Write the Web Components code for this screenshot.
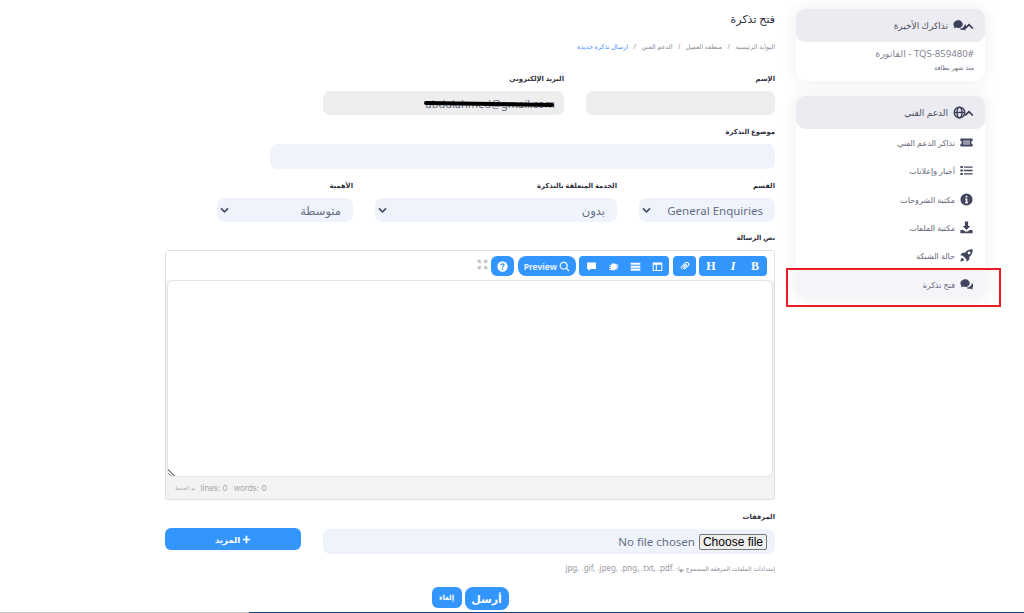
<!DOCTYPE html>
<html lang="ar">
<head>
<meta charset="utf-8">
<title>فتح تذكرة</title>
<style>
  html, body { margin: 0; height: 100%; overflow: hidden; background: #fff; }
  body { font-family: "Noto Sans", "DejaVu Sans", sans-serif; color: #3f4254; }
</style>
</head>
<body>
<ticket-page></ticket-page>

<script>
const ICONS = {
  chat: '<path d="M7 1.5C3.2 1.5.5 3.8.5 6.6c0 1.2.5 2.3 1.4 3.2-.3.9-.9 1.6-1.2 1.9 1.2 0 2.6-.6 3.4-1.1 1.9.7 3.4.6 4.7.1 1.9-.8 3.2-2.3 3.2-4.1 0-2.8-2.8-5.1-5-5.1z"/><path d="M14.5 6.2c.1 3-2.6 5.3-6.3 5.7 1 1.2 2.9 1.8 4.9 1.3.8.5 1.9.9 2.9.9-.5-.5-.9-1.1-1.1-1.7 1-.8 1.6-1.8 1.6-2.9 0-1.4-.9-2.6-2-3.3z"/>',
  globe: '<g fill="none" stroke="currentColor" stroke-width="1.8"><circle cx="8" cy="8" r="6.5"/><ellipse cx="8" cy="8" rx="3" ry="6.5"/><path d="M1.5 8h13"/></g>',
  ticket: '<path fill-rule="evenodd" d="M.5 3h15v3.2a1.800 1.800 0 0 0 0 3.600V13H.5V9.800a1.800 1.800 0 0 0 0-3.600zM4 5.500v5h8v-5z"/><path opacity=".55" d="M4 5.500h8v5H4z"/>',
  list: '<path d="M.5 2.500h3v2.500h-3zM.5 6.800h3v2.500h-3zM.5 11h3v2.500h-3zM5 3h10.500v1.600H5zM5 7.200h10.500v1.600H5zM5 11.400h10.500V13H5z"/>',
  info: '<path fill-rule="evenodd" d="M8 .5a7.500 7.500 0 1 0 0 15 7.500 7.500 0 0 0 0-15zM7 3.500h2v2H7zM6.500 6.800h2.500v4.200h.8v1.500H6.300V11h.8V8.300h-.6z"/>',
  download: '<path d="M6 .5h4v5.500h2.800L8 11 3.200 6H6zM.5 11h3.800l2 2h3.400l2-2h3.800v4H.500z"/>',
  rocket: '<path d="M15.600.4C12 .2 8.800 1.400 6.200 4.500H3L.4 7.800l3.100.4 4.300 4.300.4 3.100 3.300-2.600v-3.200C14.600 7.200 15.800 4 15.600.4zM11.200 6.500a1.700 1.700 0 1 1 0-3.400 1.700 1.700 0 0 1 0 3.400zM2.700 10.800C1.300 11.500.8 13.500.5 15.500c2-.3 4-.8 4.700-2.200z"/>',
  caret: '<path d="M2.200 10.500 8 4.700l5.800 5.800-1.500 1.500L8 7.700 3.700 12z"/>',
  down: '<path d="M2 5.800 8 11.800l6-6L12.200 4 8 8.200 3.800 4z"/>',
  expand: '<path d="M1 1h5L4.500 2.500 6.500 4.500 4.500 6.500 2.500 4.500 1 6zM15 1v5l-1.500-1.500-2 2-2-2 2-2L10 1zM1 15v-5l1.500 1.500 2-2 2 2-2 2L6 15zM15 15h-5l1.500-1.500-2-2 2-2 2 2L15 10z"/>',
  help: '<path fill-rule="evenodd" d="M8 .5a7.500 7.500 0 1 0 0 15 7.500 7.500 0 0 0 0-15zM7 11h2v2H7zM5 6c0-1.700 1.300-2.800 3.100-2.800S11 4.300 11 5.900c0 1.300-.8 1.900-1.500 2.400-.4.300-.6.500-.6 1.100H7.100c0-1.200.5-1.800 1.200-2.300.6-.4.900-.6.900-1.100 0-.5-.5-.9-1.100-.9-.7 0-1.200.5-1.200 1.100z"/>',
  search: '<path fill-rule="evenodd" d="M6.800.8a6 6 0 1 0 3.500 10.900l3.500 3.500 1.500-1.500-3.500-3.500A6 6 0 0 0 6.800.8zm0 2a4 4 0 1 1 0 8 4 4 0 0 1 0-8z"/>',
  comment: '<path d="M1.500 2h13v9.500H7L3.500 14.500v-3h-2z"/>',
  bug: '<path d="M5.500 3.500h5l1.500 2 2.500-1v1.500l-2 .8v1h2.500v1.500H12v1l2 .8v1.500l-2.500-1-1.500 1.800h-4L4.500 12.600 2 13.600v-1.500l2-.8v-1H1.500V8.800H4v-1l-2-.8V5.500l2.500 1z"/>',
  rows: '<path d="M1 2.500h14v3H1zM1 6.800h14v3H1zM1 11h14v3H1z"/>',
  table: '<path fill-rule="evenodd" d="M1 2h14v12.500H1zM2.500 5.500V13h3V5.500zM7 5.500V13h6.500V5.500z"/>',
  link: '<path d="M13.800 2.200a3.600 3.600 0 0 0-5.100 0L3 7.900a2.500 2.500 0 0 0 3.500 3.500L11 6.900a1.400 1.400 0 0 0-2-2L5.400 8.500l1 1L10 5.900l.1.100-4.500 4.500a1.200 1.200 0 0 1-1.700-1.700l5.700-5.700a2.300 2.300 0 0 1 3.200 3.200L7.300 11.800l1 1 5.500-5.500a3.600 3.600 0 0 0 0-5.100z"/>',
  plus: '<path d="M6.500 1.500h3v5h5v3h-5v5h-3v-5h-5v-3h5z"/>'
};

class XIcon extends HTMLElement {
  connectedCallback() {
    const size = this.getAttribute('size') || 14;
    this.attachShadow({ mode: 'open' }).innerHTML = `
      <style>
        :host { display: inline-flex; flex: none; }
        svg { display: block; fill: currentColor; }
      </style>
      <svg width="${size}" height="${size}" viewBox="0 0 16 16">${ICONS[this.getAttribute('name')]}</svg>`;
  }
}
customElements.define('x-icon', XIcon);

class SideCard extends HTMLElement {
  connectedCallback() {
    const title = this.getAttribute('title');
    const icon = this.getAttribute('icon');
    this.removeAttribute('title');
    this.attachShadow({ mode: 'open' }).innerHTML = `
      <style>
        :host {
          display: block;
          background: #fff;
          border-radius: 9px;
          box-shadow: 0 0 16px rgba(60, 60, 90, .09);
        }
        header {
          height: 33px;
          box-sizing: border-box;
          padding: 0 10px;
          display: flex;
          align-items: center;
          gap: 5px;
          background: #ebebf1;
          border-radius: 9px;
          font-size: 9px;
          color: #50505f;
        }
        header x-icon { color: #3c3f58; }
        .caret { margin-left: -8px; color: #30324a; }
      </style>
      <header>
        <x-icon class="caret" name="caret" size="12"></x-icon>
        <x-icon name="${icon}" size="13"></x-icon>
        <span>${title}</span>
      </header>
      <slot></slot>`;
  }
}
customElements.define('side-card', SideCard);

class SideItem extends HTMLElement {
  connectedCallback() {
    this.attachShadow({ mode: 'open' }).innerHTML = `
      <style>
        :host {
          display: flex;
          align-items: center;
          gap: 5px;
          height: 28.3px;
          padding: 0 12px;
          font-size: 8px;
          color: #65657a;
          border-radius: 0 0 9px 9px;
        }
        :host(:first-child) { margin-top: -.5px; }
        :host([active]) { background: #f5f5f9; }
        x-icon { color: #43465f; }
      </style>
      <x-icon name="${this.getAttribute('icon')}" size="13"></x-icon>
      <span><slot></slot></span>`;
  }
}
customElements.define('side-item', SideItem);

class AppSidebar extends HTMLElement {
  connectedCallback() {
    this.attachShadow({ mode: 'open' }).innerHTML = `
      <style>
        :host {
          display: flex;
          flex-direction: column;
          gap: 15px;
          width: 189px;
          position: relative;
        }
        .recent { padding: 6px 11px 0; box-sizing: border-box; height: 39px; color: #858596; font-size: 9.6px; line-height: 12px; }
        .recent small { display: block; font-size: 6.5px; color: #6c6c7c; margin-top: 2px; }
        .mark {
          position: absolute;
          left: -10.5px;
          top: 258.5px;
          width: 211px;
          height: 35px;
          border: 2.5px solid #ed1c24;
        }
      </style>
      <side-card title="تذاكرك الأخيرة" icon="chat">
        <div class="recent">
          #TQS-859480 - الفاتورة
          <small>منذ شهر بطاقة</small>
        </div>
      </side-card>
      <side-card title="الدعم الفني" icon="globe">
        <side-item icon="ticket">تذاكر الدعم الفني</side-item>
        <side-item icon="list">أخبار وإعلانات</side-item>
        <side-item icon="info">مكتبة الشروحات</side-item>
        <side-item icon="download">مكتبة الملفات</side-item>
        <side-item icon="rocket">حالة الشبكة</side-item>
        <side-item icon="chat" active>فتح تذكرة</side-item>
      </side-card>
      <div class="mark"></div>`;
  }
}
customElements.define('app-sidebar', AppSidebar);

class FormField extends HTMLElement {
  connectedCallback() {
    this.attachShadow({ mode: 'open' }).innerHTML = `
      <style>
        :host { display: block; }
        label {
          display: block;
          height: 13px;
          margin-bottom: 6px;
          line-height: 13px;
          font-size: 6.8px;
          font-weight: 700;
          color: #2f3040;
        }
      </style>
      <label>${this.getAttribute('label')}</label>
      <slot></slot>`;
  }
}
customElements.define('form-field', FormField);

class FormBox extends HTMLElement {
  connectedCallback() {
    const select = this.hasAttribute('select');
    this.attachShadow({ mode: 'open' }).innerHTML = `
      <style>
        :host {
          display: flex;
          align-items: center;
          justify-content: space-between;
          box-sizing: border-box;
          height: 24px;
          padding: 0 12px 0 1.5px;
          border-radius: 7px;
          background: #eff3fc;
          font-size: 11.5px;
          color: #666e85;
          position: relative;
          overflow: hidden;
        }
        :host([disabled]) { background: #eeeeee; padding-right: 9px; }
        x-icon { color: #444a6a; }
      </style>
      <span><slot></slot></span>
      ${select ? '<x-icon name="down" size="11"></x-icon>' : ''}`;
  }
}
customElements.define('form-box', FormBox);

class ToolGroup extends HTMLElement {
  connectedCallback() {
    this.attachShadow({ mode: 'open' }).innerHTML = `
      <style>
        :host {
          display: flex;
          align-items: center;
          height: 20px;
          border-radius: 4px;
          background: #3396ff;
          color: #fff;
          padding: 0 1px;
        }
      </style>
      <slot></slot>`;
  }
}
customElements.define('tool-group', ToolGroup);

class ToolButton extends HTMLElement {
  connectedCallback() {
    const icon = this.getAttribute('icon');
    this.attachShadow({ mode: 'open' }).innerHTML = `
      <style>
        :host {
          display: flex;
          align-items: center;
          justify-content: center;
          width: 22px;
          height: 20px;
          font: 700 12px "Liberation Serif", serif;
          color: #fff;
        }
      </style>
      ${icon ? `<x-icon name="${icon}" size="11"></x-icon>` : ''}<slot></slot>`;
  }
}
customElements.define('tool-button', ToolButton);

class MdEditor extends HTMLElement {
  connectedCallback() {
    this.attachShadow({ mode: 'open' }).innerHTML = `
      <style>
        :host {
          display: flex;
          flex-direction: column;
          height: 250px;
          box-sizing: border-box;
          border: 1px solid #e0e0e0;
          border-radius: 3px;
          background: #f3f3f3;
        }
        .toolbar {
          direction: rtl;
          height: 29px;
          flex: none;
          box-sizing: border-box;
          padding: 5px 7px 0 0;
          display: flex;
          gap: 3.4px;
          background: #fff;
        }
        .attach-group { padding: 0 .5px; }
        .preview {
          direction: ltr;
          box-sizing: border-box;
          width: 58px;
          justify-content: center;
          border-radius: 8px;
          font: 700 8.5px "Noto Sans", sans-serif;
          color: #e6f1ff;
          gap: 2px;
        }
        .help { border-radius: 6px; width: 23px; box-sizing: border-box; justify-content: center; }
        .expand { color: #c0c0c0; margin: 3px 0 0 0; }
        .area {
          flex: 1;
          background: #fff;
          border: 1px solid #e4e4e4;
          border-radius: 7px;
          margin: 0 1px;
          position: relative;
        }
        .grip {
          position: absolute;
          left: 0;
          bottom: 0;
          width: 8px;
          height: 8px;
          background: repeating-linear-gradient(45deg, transparent 0 1.5px, #8a8a8a 1.5px 2.5px);
          clip-path: polygon(0 0, 100% 100%, 0 100%);
        }
        .status {
          direction: ltr;
          height: 22px;
          flex: none;
          display: flex;
          align-items: center;
          gap: 6px;
          padding-left: 9px;
          font: 8px "Inter", sans-serif;
          color: #a6a6a6;
        }
        .status span:first-child { font-size: 5.4px; }
      </style>
      <div class="toolbar">
        <tool-group>
          <tool-button>B</tool-button>
          <tool-button style="font-style: italic">I</tool-button>
          <tool-button>H</tool-button>
        </tool-group>
        <tool-group class="attach-group"><tool-button icon="link"></tool-button></tool-group>
        <tool-group>
          <tool-button icon="table"></tool-button>
          <tool-button icon="rows"></tool-button>
          <tool-button icon="bug"></tool-button>
          <tool-button icon="comment"></tool-button>
        </tool-group>
        <tool-group class="preview"><span>Preview</span><x-icon name="search" size="11"></x-icon></tool-group>
        <tool-group class="help"><x-icon name="help" size="11"></x-icon></tool-group>
        <x-icon class="expand" name="expand" size="11"></x-icon>
      </div>
      <div class="area"><div class="grip"></div></div>
      <div class="status">
        <span>تم الحفظ</span>
        <span>lines: 0</span>
        <span>words: 0</span>
      </div>`;
  }
}
customElements.define('md-editor', MdEditor);

class FileBox extends HTMLElement {
  connectedCallback() {
    this.attachShadow({ mode: 'open' }).innerHTML = `
      <style>
        :host {
          display: flex;
          align-items: center;
          gap: 4px;
          box-sizing: border-box;
          height: 25px;
          padding: 0 8px;
          background: #eff3fc;
          border-radius: 7px;
          font-size: 11.5px;
          color: #666e85;
        }
        button {
          height: 16px;
          padding: 0 3px;
          font: 12px "Liberation Sans", sans-serif;
          color: #000;
          background: #efefef;
          border: 1px solid #767676;
          border-radius: 2px;
        }
      </style>
      <button type="button">Choose file</button>
      <span>No file chosen</span>`;
  }
}
customElements.define('file-box', FileBox);

class BlueButton extends HTMLElement {
  connectedCallback() {
    this.attachShadow({ mode: 'open' }).innerHTML = `
      <style>
        :host {
          display: inline-flex;
          align-items: center;
          justify-content: center;
          gap: 2px;
          box-sizing: border-box;
          height: 22px;
          background: #3396ff;
          color: #fff;
          font-weight: 700;
          font-size: 8px;
          border-radius: 6px;
        }
        :host([big]) { height: 23px; width: 44px; font-size: 11px; border-radius: 8px; }
        :host([small]) { height: 21px; width: 30px; font-size: 7px; }
      </style>
      <slot></slot>`;
  }
}
customElements.define('blue-button', BlueButton);

class TicketForm extends HTMLElement {
  connectedCallback() {
    this.attachShadow({ mode: 'open' }).innerHTML = `
      <style>
        :host {
          display: block;
          direction: rtl;
          width: 610px;
          height: 613px;
          box-sizing: border-box;
          padding-top: 11px;
        }
        h1 { margin: 0; height: 16px; line-height: 16px; font-size: 11px; font-weight: 400; color: #2f3040; }
        nav {
          display: flex;
          gap: 5.5px;
          height: 12px;
          line-height: 12px;
          margin-top: 14px;
          font-size: 6.4px;
          color: #8a8a98;
        }
        nav b { font-weight: 400; color: #3f8cff; }
        .row { display: grid; column-gap: 22px; }
        .identity { grid-template-columns: 189px 241px; margin-top: 19px; }
        .subject { width: 505px; margin-top: 10px; }
        .subject form-box { height: 25px; }
        .selects { grid-template-columns: 136px 242px 136px; margin-top: 10px; }
        .message { margin-top: 9px; }
        .attach { margin-top: 10px; display: flex; gap: 22px; align-items: flex-end; }
        .attach form-field { width: 452px; }
        .attach blue-button { width: 136px; margin-bottom: 4px; font-size: 8.5px; }
        .hint { margin-top: 9px; height: 9px; line-height: 9px; font-size: 6.1px; color: #8c8c98; }
        .hint span { font-size: 8px; color: #9a9aa4; }
        .actions { margin-top: 15px; display: flex; justify-content: center; gap: 3px; }
        .email { font-size: 11px; }
        .scribble {
          position: absolute;
          left: 101px;
          top: 10.5px;
          width: 130px;
          height: 4px;
          background: #000;
          border-radius: 2px;
          transform: rotate(.9deg);
        }
      </style>
      <h1>فتح تذكرة</h1>
      <nav>
        <span>البوابة الرئيسية</span><span>/</span>
        <span>منطقة العميل</span><span>/</span>
        <span>الدعم الفني</span><span>/</span>
        <b>ارسال تذكرة جديدة</b>
      </nav>
      <div class="row identity">
        <form-field label="الإسم"><form-box disabled>&nbsp;</form-box></form-field>
        <form-field label="البريد الإلكتروني">
          <form-box disabled><bdi class="email">abdulahmed@gmail.com</bdi><i class="scribble"></i></form-box>
        </form-field>
      </div>
      <form-field class="subject" label="موضوع التذكرة"><form-box>&nbsp;</form-box></form-field>
      <div class="row selects">
        <form-field label="القسم"><form-box select><bdi>General Enquiries</bdi></form-box></form-field>
        <form-field label="الخدمة المتعلقة بالتذكرة"><form-box select>بدون</form-box></form-field>
        <form-field label="الأهمية"><form-box select>متوسطة</form-box></form-field>
      </div>
      <form-field class="message" label="نص الرسالة"><md-editor></md-editor></form-field>
      <div class="attach">
        <form-field label="المرفقات"><file-box></file-box></form-field>
        <blue-button><x-icon name="plus" size="9"></x-icon>المزيد</blue-button>
      </div>
      <div class="hint">إمتدادات الملفات المرفقة المسموح بها: <span>.jpg, .gif, .jpeg, .png, .txt, .pdf</span></div>
      <div class="actions">
        <blue-button big>أرسل</blue-button>
        <blue-button small>إلغاء</blue-button>
      </div>`;
  }
}
customElements.define('ticket-form', TicketForm);

class TicketPage extends HTMLElement {
  connectedCallback() {
    this.attachShadow({ mode: 'open' }).innerHTML = `
      <style>
        :host {
          display: block;
          height: 613px;
          position: relative;
          overflow: hidden;
          background: #fff;
        }
        .layout {
          direction: rtl;
          display: flex;
          gap: 21px;
          padding: 9px 39px 0 0;
        }
        ticket-form { margin-top: -9px; }
        .line {
          position: absolute;
          left: 0;
          right: 0;
          bottom: 0;
          height: 1px;
          background: linear-gradient(90deg, #c8c8c8 0 249px, #0b4a80 249px);
        }
      </style>
      <div class="layout">
        <app-sidebar></app-sidebar>
        <ticket-form></ticket-form>
      </div>
      <div class="line"></div>`;
  }
}
customElements.define('ticket-page', TicketPage);
</script>
</body>
</html>
